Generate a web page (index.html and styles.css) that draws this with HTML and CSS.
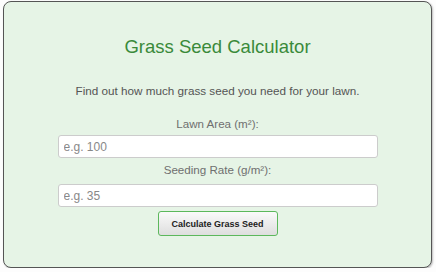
FILE: index.html
```html
<!DOCTYPE html>
<html lang="en">

<head>
    <meta charset="UTF-8">
    <meta name="viewport" content="width=device-width, initial-scale=1.0">
    <title>Grass Seed Calculator</title>
    <link rel="stylesheet" href="styles.css">
</head>

<body>
    <div class="calculator">
        <h2>Grass Seed Calculator</h2>
        <p class="intro">Find out how much grass seed you need for your lawn.</p>

        <form class="seed-form">
            <label for="lawnArea">Lawn Area (m²):</label>
            <input type="number" id="lawnArea" placeholder="e.g. 100">

            <label for="seedRate" class="second">Seeding Rate (g/m²):</label>
            <input type="number" id="seedRate" placeholder="e.g. 35">

            <button type="button">Calculate Grass Seed</button>
        </form>
    </div>
</body>

</html>
```

FILE: styles.css
```css
body {
    font-family: "Liberation Sans", Arial, sans-serif;
    background-color: #fdfdfd;
    margin: 0;
    padding: 1px 4px 0 3px;
}

.calculator {
    background-color: #e6f4e6;
    border: 1px solid #555;
    border-radius: 8px;
    box-shadow: 1px 1px 2px rgba(0, 0, 0, 0.25);
    height: 265px;
    display: flex;
    flex-direction: column;
    align-items: center;
}

.calculator h2 {
    margin: 34px 0 0 0;
    font-size: 18.5px;
    line-height: 21px;
    font-weight: normal;
    color: #3a8a3a;
}

.intro {
    margin: 27px 0 0 0;
    font-size: 11.7px;
    line-height: 14px;
    color: #555;
}

.seed-form {
    display: flex;
    flex-direction: column;
    align-items: center;
    margin-top: 19px;
}

.seed-form label {
    font-size: 11.6px;
    line-height: 14px;
    color: #6f6f6f;
    margin-bottom: 4px;
}

.seed-form label.second {
    margin-top: 5px;
    margin-bottom: 7px;
}

.seed-form input {
    box-sizing: border-box;
    width: 320px;
    height: 23px;
    padding: 0 5px;
    border: 1px solid #ccc;
    border-radius: 3px;
    background-color: #fff;
    font-family: "Liberation Sans", Arial, sans-serif;
    font-size: 12px;
}

.seed-form input::placeholder {
    color: #888;
}

.seed-form button {
    margin-top: 4px;
    width: 120px;
    height: 25px;
    border: 1px solid #5cb85c;
    border-radius: 3px;
    background: linear-gradient(#fafafa, #dedede);
    color: #222;
    font-family: "Liberation Sans", Arial, sans-serif;
    font-size: 9px;
    font-weight: bold;
    cursor: pointer;
}
```
